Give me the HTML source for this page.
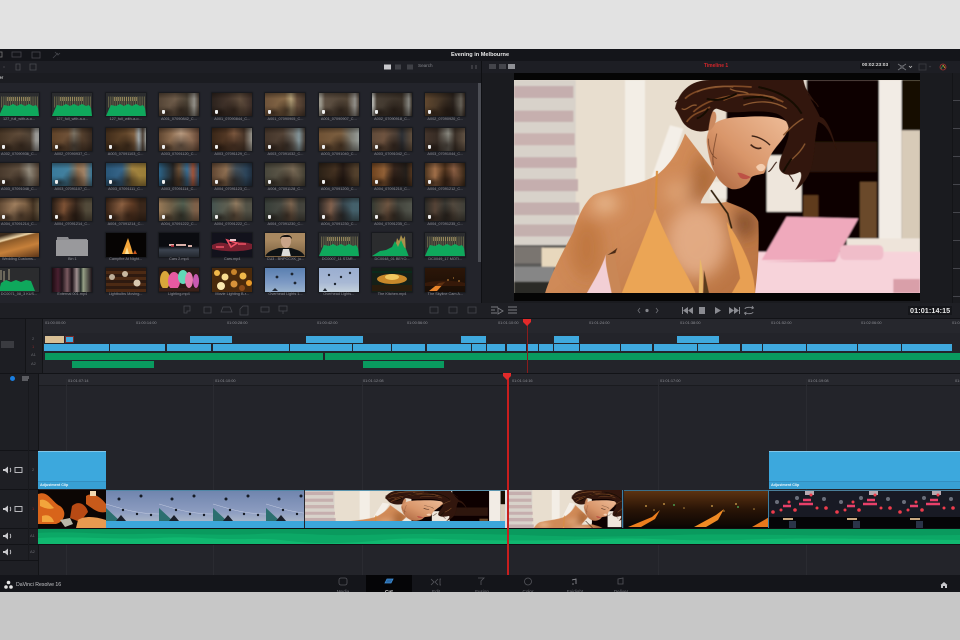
<!DOCTYPE html>
<html><head><meta charset="utf-8"><title>DaVinci Resolve 16</title>
<style>
*{box-sizing:border-box}
html,body{margin:0;padding:0;width:960px;height:640px;overflow:hidden}
body{background:linear-gradient(#e2e2e2 0,#e2e2e2 49px,#c7c7c7 592px);font-family:"Liberation Sans",sans-serif;position:relative}
.a{position:absolute}
#app{left:0;top:49px;width:960px;height:543px;background:#22232a;overflow:hidden;filter:blur(.3px)}
#g{left:-1px;top:44px;display:grid;grid-template-columns:repeat(9,40px);column-gap:13.3px;grid-auto-rows:35px}
.c{position:relative;height:35px}
.t{position:absolute;left:0;top:0;width:40px;height:23px;overflow:hidden;box-shadow:0 0 1px 1px #17181c}
.t svg{display:block;width:40px;height:23px}
.m:before{content:"";position:absolute;inset:0;background:radial-gradient(ellipse 12px 12px at 55% 75%,rgba(20,12,8,.55),transparent 100%),radial-gradient(ellipse 7px 5px at 20% 85%,rgba(20,12,8,.5),transparent 100%),linear-gradient(rgba(10,6,4,.45),rgba(10,6,4,.1) 25%,rgba(10,6,4,.1) 55%,rgba(10,6,4,.5))}
.m:after{content:"";position:absolute;left:3px;bottom:2px;width:3px;height:4px;background:#eee;border-radius:1px 1px 2px 2px}
.l{position:absolute;left:-6px;width:52px;top:24px;text-align:center;font-size:3.8px;line-height:5px;color:#92939a;white-space:nowrap;overflow:hidden}
.r{position:absolute;font-size:3.9px;color:#8d8e94;white-space:nowrap;line-height:5px}
.b{position:absolute;background:#3fa9de;height:7px;top:0}
.gr{position:absolute;background:#099a5f;height:7px}
.n{position:absolute;top:14px;width:46px;text-align:center;font-size:4.6px;line-height:5px;color:#75767c}
.tk{position:absolute;left:32px;font-size:4px;color:#6b6c72;line-height:5px}
</style></head><body>
<svg width="0" height="0" style="position:absolute"><defs>
<filter id="bl"><feGaussianBlur stdDeviation="2.2"/></filter>
<filter id="s1"><feGaussianBlur stdDeviation="1.1"/></filter>
<filter id="b6" x="-50%" y="-50%" width="200%" height="200%"><feGaussianBlur stdDeviation="24"/></filter>
<linearGradient id="sk" x1="0" y1="0" x2="1" y2="1"><stop offset="0" stop-color="#d98f5a"/><stop offset=".5" stop-color="#cf8a58"/><stop offset="1" stop-color="#b87240"/></linearGradient>
<linearGradient id="fc" x1="1" y1="0" x2="0" y2="1"><stop offset="0" stop-color="#eebc98"/><stop offset=".55" stop-color="#d9966a"/><stop offset="1" stop-color="#a8623c"/></linearGradient>
<symbol id="wv" viewBox="0 0 40 23" preserveAspectRatio="none"><rect width="40" height="23" fill="#2b2c2e"/><path d="M2 9H39" stroke="#97905f" stroke-width="11" stroke-dasharray="1 .8" opacity=".5"/><path d="M8 6H32" stroke="#c8b070" stroke-width="4" stroke-dasharray="1 1" opacity=".55"/><path d="M0 23l3-7 2-4 5 1 4-2 4 2 4-2 4 2 4-2 4 2 3-1 2 3 1 8z" fill="#0fa85c"/></symbol>
<symbol id="w" viewBox="12 14 1218 640" preserveAspectRatio="none">
<rect x="12" y="14" width="1218" height="640" fill="#e8decf"/>
<g filter="url(#bl)">
<rect x="12" y="14" width="185" height="510" fill="#d8d2ca"/>
<rect x="12" y="32" width="178" height="36" fill="#c5aeae"/><rect x="12" y="106" width="178" height="34" fill="#c6afae"/><rect x="12" y="174" width="182" height="36" fill="#c9b2b0"/><rect x="12" y="246" width="188" height="32" fill="#c6aeae"/><rect x="12" y="312" width="192" height="36" fill="#c5aeae"/><rect x="12" y="382" width="196" height="38" fill="#c4afae"/><rect x="12" y="448" width="200" height="36" fill="#c4b0ae"/>
<rect x="345" y="14" width="60" height="320" fill="#f3eee6"/>
<path d="M480 150l40 10-60 180-40-20z" fill="#f4efe8"/>
<rect x="12" y="510" width="230" height="150" fill="#5b5a58"/><rect x="12" y="620" width="180" height="40" fill="#2c2a28"/><rect x="12" y="515" width="90" height="50" fill="#7a7570"/><rect x="95" y="518" width="75" height="58" fill="#e8d8bd"/><rect x="12" y="575" width="120" height="45" fill="#868686"/>
<rect x="650" y="14" width="590" height="640" fill="#0b0504"/>
<rect x="890" y="200" width="210" height="90" fill="#2d140b"/><rect x="880" y="360" width="45" height="70" fill="#5f3a1f"/><rect x="1050" y="320" width="50" height="170" fill="#6a4a2c"/>
<rect x="770" y="240" width="105" height="170" fill="#eee6dc"/><rect x="850" y="14" width="40" height="70" fill="#e6ddd2"/><rect x="600" y="320" width="50" height="50" fill="#f1eadf"/>
<rect x="1107" y="14" width="68" height="500" fill="#f2ece5"/>
<rect x="1175" y="165" width="55" height="330" fill="#d8cbb8"/><rect x="1175" y="14" width="55" height="150" fill="#170a06"/>
<rect x="1010" y="490" width="220" height="45" fill="#eee4da"/>
<rect x="230" y="560" width="1000" height="100" fill="#f6d2d9"/>
<path d="M740 530h500v130H740z" fill="#f7d3da"/>
<path d="M755 555l75-130 215 5-70 125z" fill="#efa9bc"/><path d="M760 560l215-5 20-30-20 35z" fill="#e18ea8"/>
<rect x="990" y="510" width="130" height="45" rx="14" fill="#f0bdc9"/>
<rect x="1150" y="612" width="80" height="42" fill="#d99fa9"/>
</g>
<g filter="url(#s1)">
<clipPath id="bc"><path d="M105 655C125 590 165 520 190 470C205 420 225 380 250 360C290 340 380 335 440 300C480 270 510 220 525 175L620 300C600 340 575 365 572 385C600 385 630 385 650 380C690 395 735 410 745 440C748 500 745 580 735 655Z"/></clipPath>
<path d="M105 655C125 590 165 520 190 470C205 420 225 380 250 360C290 340 380 335 440 300C480 270 510 220 525 175L620 300C600 340 575 365 572 385C600 385 630 385 650 380C690 395 735 410 745 440C748 500 745 580 735 655Z" fill="url(#sk)"/>
<g clip-path="url(#bc)"><g filter="url(#b6)">
<ellipse cx="285" cy="385" rx="40" ry="25" fill="#f4d0ac" opacity=".75"/>
<path d="M570 220l50 80-40 90-45-15z" fill="#9a5828" opacity=".7"/>
<ellipse cx="500" cy="350" rx="40" ry="35" fill="#ecba92" opacity=".5"/>
<ellipse cx="560" cy="500" rx="90" ry="110" fill="#e8b490" opacity=".8"/>
<ellipse cx="705" cy="445" rx="35" ry="45" fill="#6e3f20" opacity=".75"/>
<ellipse cx="230" cy="520" rx="50" ry="90" fill="#b46a30" opacity=".55"/>
</g></g>
<path d="M230 655c20-35 45-75 58-118l18 118z" fill="#f2cfd5"/>
<path d="M305 655c-8-45-22-90-17-120l22-18 25 138z" fill="#c98756"/>
<path d="M292 540c12-8 22-14 30-22l-6 16z" fill="#4a2a18"/>
<path d="M435 402l-100 253h222c-16-40-45-85-65-125-22-48-42-85-57-128z" fill="#eba555"/>
<path d="M650 440c8 60 35 120 40 170l-25 45h70c0-70-40-150-85-215z" fill="#e8a052"/>
<path d="M436 402l5-115" stroke="#d98e3c" stroke-width="6" fill="none"/>
<path d="M603 345l50 70 12 45" stroke="#33200f" stroke-width="5" fill="none"/>
<path d="M566 655l4-105c10 30 10 80 8 105z" fill="#e8b868"/><path d="M580 655l2-70 15 70z" fill="#5a3a1e"/>
<path d="M590 200C590 150 620 125 700 125C770 120 830 125 838 150C830 190 790 215 775 255C770 270 768 285 762 295C745 300 725 300 722 310C715 330 690 345 665 342C630 330 600 290 590 200Z" fill="url(#fc)"/>
<path d="M585 130c-10 20 0 40 15 35 15-10 25-40 15-55-10-5-25 5-30 20z" fill="#cb8a60"/>
<path d="M725 182c20 2 42 14 55 28" stroke="#3a2114" stroke-width="4" fill="none"/><path d="M722 208c10 10 22 14 32 10" stroke="#3f2416" stroke-width="5" fill="none"/>
<path d="M682 293c14-2 26 8 40 12-10 10-25 8-32 2z" fill="#bd5145"/>
<path d="M738 275c10-12 22-12 28 0-2 15-20 20-28 0z" fill="#f4ceb0"/>
<path d="M495 100C505 50 540 14 600 14L880 14C890 60 920 100 930 125C950 125 970 180 980 225C965 190 955 150 925 140C915 170 915 230 905 270C900 300 880 330 855 345C870 320 880 300 870 290C840 305 815 300 808 280C805 250 825 225 835 185C840 160 835 130 800 115C750 100 690 115 650 110L620 100C605 100 600 130 595 165C570 175 530 165 515 135C505 115 500 105 495 100Z" fill="#33180d"/>
<g fill="none" stroke-width="5">
<path d="M525 70c40-40 140-40 200-35M550 110c40-40 130-60 200-50M640 75c50-25 120-25 180 5M530 140c20-30 50-30 70-45" stroke="#7f4a25"/>
<path d="M560 50c30-15 70-20 110-15M700 90c40-15 90-15 130 10M820 180c20-20 40-40 60-50M835 265c15-20 35-30 50-60M515 100c15 10 25-15 45-10M660 40c15 12 40 5 55 15M760 60c15 5 30 0 45 15" stroke="#8c5830" stroke-width="4"/>
<path d="M590 70c30 10 60 0 90-15M745 35c50 10 100 30 130 80M845 250c-15 20-20 30-25 40M700 70c30-5 60-10 90 5M560 130c15-5 25-15 35-30" stroke="#150a05" stroke-width="6"/>
<path d="M800 260c-10 10-15 25-25 30M830 285c5 15 15 20 20 35M895 60c10 15 25 20 30 35M520 60c-10 5-15 15-25 20M870 20c15 15 25 35 40 55" stroke="#33180d" stroke-width="3"/>
</g>
<path d="M620 175c-5 30-15 60-10 95M595 190c0 20 5 50 25 60" stroke="#6a3b22" stroke-width="2" fill="none"/>
</g>
</symbol>
</defs></svg>

<div id="app" class="a">
<!-- title bar -->
<div class="a" style="left:0;top:0;width:960px;height:12px;background:#14151a"></div>
<svg class="a" style="left:0;top:1px" width="70" height="10" fill="none" stroke="#45464c" stroke-width=".8"><rect x="-3" y="2" width="5" height="5" stroke="#777"/><rect x="12" y="2" width="9" height="5"/><rect x="32" y="2" width="8" height="6"/><path d="M53 8l5-5M55 2l3 3 2-2"/></svg>
<div class="a" style="left:380px;width:200px;top:3px;text-align:center;font-size:5.6px;font-weight:bold;line-height:7px;color:#e8e8e8">Evening in Melbourne</div>
<!-- toolbar left -->
<div class="a" style="left:0;top:12px;width:482px;height:12px;background:#1e1f25"></div>
<svg class="a" style="left:0;top:13px" width="40" height="10" fill="none" stroke="#4b4c52" stroke-width=".8"><path d="M3 5h2"/><path d="M16 2h4v6h-4zM30 2h6v6h-6z"/></svg>
<svg class="a" style="left:382px;top:13px" width="100" height="10" fill="none"><path d="M2 2.500h7v5H2z" fill="#c8c8cc"/><path d="M13 2.500h6v5h-6z" fill="#3f4046"/><path d="M25 2.500h6v5h-6z" fill="#3f4046"/><path d="M90 3v4M94 3v4" stroke="#55565b"/></svg>
<div class="a" style="left:418px;top:14px;font-size:4.6px;line-height:6px;color:#85868c">Search</div>
<!-- path -->
<div class="a" style="left:0;top:24px;width:482px;height:10px;background:#1b1c21"></div>
<div class="a" style="left:-11px;top:26px;font-size:4.4px;font-weight:bold;line-height:6px;color:#d8d8d8">Master</div>
<!-- bin -->
<div class="a" style="left:0;top:34px;width:482px;height:220px;background:#23242b"></div>
<div class="a" style="left:478px;top:34px;width:3px;height:179px;background:#4c4e55"></div>
<div id="g" class="a">
<div class="c"><div class="t"><svg><use href="#wv"/></svg></div><div class="l">127_full_with-a-o...</div></div>
<div class="c"><div class="t"><svg><use href="#wv"/></svg></div><div class="l">127_full_with-a-o...</div></div>
<div class="c"><div class="t"><svg><use href="#wv"/></svg></div><div class="l">127_full_with-a-o...</div></div>
<div class="c"><div class="t m" style="background:linear-gradient(90deg,#5d4c3c,#7a6652 40%,#544a3c 70%,#a09e96 88%,#4d4136)"></div><div class="l">A001_07090842_C...</div></div>
<div class="c"><div class="t m" style="background:linear-gradient(90deg,#2f2520,#4a3a30 40%,#6a5644 70%,#40302a)"></div><div class="l">A001_07090844_C...</div></div>
<div class="c"><div class="t m" style="background:linear-gradient(90deg,#7a5c40,#94744f 50%,#c9b487 65%,#6d5440 80%,#4a3a2e)"></div><div class="l">A001_07090905_C...</div></div>
<div class="c"><div class="t m" style="background:linear-gradient(90deg,#a8a498 5%,#67584a 15%,#5a4c3c 70%,#a09e98 90%,#554a40)"></div><div class="l">A001_07090907_C...</div></div>
<div class="c"><div class="t m" style="background:linear-gradient(90deg,#c0c0ba 3%,#4f453a 12%,#40362c 75%,#92928c 92%,#3f3830)"></div><div class="l">A002_07090918_C...</div></div>
<div class="c"><div class="t m" style="background:linear-gradient(90deg,#6a4f34,#4a3a2a 40%,#2e2620 70%,#6f6a60 90%,#3a2f26)"></div><div class="l">A002_07090920_C...</div></div>

<div class="c"><div class="t m" style="background:linear-gradient(90deg,#4c3a28,#6a5440 50%,#56483a 78%,#a8a8a4 92%)"></div><div class="l">A002_07090936_C...</div></div>
<div class="c"><div class="t m" style="background:linear-gradient(90deg,#6b4a2d,#7a5a3e 40%,#8b8272 55%,#5d4632 75%,#3c2d22)"></div><div class="l">A002_07090937_C...</div></div>
<div class="c"><div class="t m" style="background:linear-gradient(90deg,#46301c,#6e4f30 50%,#8d6a48 70%,#aeb8bc 82%,#584a3e 92%,#a6aaa8)"></div><div class="l">A003_07091103_C...</div></div>
<div class="c"><div class="t m" style="background:linear-gradient(90deg,#6a4e36,#9a7758 30%,#cfae90 55%,#aa8568 75%,#6a4a38)"></div><div class="l">A003_07091120_C...</div></div>
<div class="c"><div class="t m" style="background:linear-gradient(90deg,#3f2a1a,#5a3d28 35%,#8a6246 55%,#4e3a2c 80%,#a7a59c)"></div><div class="l">A003_07091129_C...</div></div>
<div class="c"><div class="t m" style="background:linear-gradient(90deg,#4a3a2e,#5c4a3c 45%,#7c7a74 70%,#8fa4aa 85%,#4a4038)"></div><div class="l">A003_07091032_C...</div></div>
<div class="c"><div class="t m" style="background:linear-gradient(90deg,#7a5a3a,#8a6a48 55%,#8a8a80 80%,#a5aca8)"></div><div class="l">A003_07091040_C...</div></div>
<div class="c"><div class="t m" style="background:linear-gradient(90deg,#6a5240,#7a5c46 30%,#54463c 60%,#30343a 75%,#6a5642)"></div><div class="l">A003_07091042_C...</div></div>
<div class="c"><div class="t m" style="background:linear-gradient(90deg,#4a3a30,#3c3028 30%,#9a9a90 58%,#40352c 75%,#6a5a4a)"></div><div class="l">A003_07091044_C...</div></div>

<div class="c"><div class="t m" style="background:linear-gradient(90deg,#4e3e30,#6a5846 50%,#a29a8a 75%,#5e4c3c)"></div><div class="l">A003_07091048_C...</div></div>
<div class="c"><div class="t m" style="background:linear-gradient(90deg,#3f87ad,#4a8fb0 40%,#a8835f 65%,#b08f70 80%,#3a7fa4)"></div><div class="l">A003_07091107_C...</div></div>
<div class="c"><div class="t m" style="background:linear-gradient(90deg,#2c5f85,#3c7098 40%,#b49248 65%,#a98a3c)"></div><div class="l">A003_07091111_C...</div></div>
<div class="c"><div class="t m" style="background:linear-gradient(90deg,#2f6d96,#2a2a2a 35%,#7a5a3c 50%,#3c7aa6 70%,#b05a3c 85%,#24557a)"></div><div class="l">A003_07091114_C...</div></div>
<div class="c"><div class="t m" style="background:linear-gradient(90deg,#6a4e38,#9c7a5a 35%,#4a5a66 60%,#2f4a62 85%,#223346)"></div><div class="l">A004_07091123_C...</div></div>
<div class="c"><div class="t m" style="background:linear-gradient(90deg,#4f4e42,#645e4e 40%,#84745e 70%,#4a4638)"></div><div class="l">A004_07091128_C...</div></div>
<div class="c"><div class="t m" style="background:linear-gradient(90deg,#2e2318,#4a3624 40%,#2a1e18 60%,#5a4630 90%)"></div><div class="l">A004_07091200_C...</div></div>
<div class="c"><div class="t m" style="background:linear-gradient(90deg,#7a4a22,#a06a3c 30%,#3c2a20 55%,#25201c 85%,#5a3a20)"></div><div class="l">A004_07091210_C...</div></div>
<div class="c"><div class="t m" style="background:linear-gradient(90deg,#543a22,#b07a50 25%,#54361e 50%,#98684a 72%,#3c2a18)"></div><div class="l">A004_07091212_C...</div></div>

<div class="c"><div class="t m" style="background:linear-gradient(90deg,#6a5038,#b08c68 40%,#907050 65%,#4a3826 85%,#6a5a42)"></div><div class="l">A004_07091214_C...</div></div>
<div class="c"><div class="t m" style="background:linear-gradient(90deg,#2c2018,#8a5a3a 30%,#3e2c20 60%,#5a5240 85%)"></div><div class="l">A004_07091214_C...</div></div>
<div class="c"><div class="t m" style="background:linear-gradient(90deg,#3c2618,#9a6a48 40%,#6a4228 65%,#3e2a1c 85%)"></div><div class="l">A004_07091214_C...</div></div>
<div class="c"><div class="t m" style="background:linear-gradient(90deg,#a88660,#7a6a50 30%,#5a6a5a 60%,#8a6a50 90%)"></div><div class="l">A004_07091222_C...</div></div>
<div class="c"><div class="t m" style="background:linear-gradient(90deg,#4c5c58,#6a6a5a 40%,#a38a6c 60%,#5a5a4e 85%)"></div><div class="l">A004_07091222_C...</div></div>
<div class="c"><div class="t m" style="background:linear-gradient(90deg,#3c443e,#50524a 40%,#8a7058 65%,#4a4a42 85%)"></div><div class="l">A004_07091230_C...</div></div>
<div class="c"><div class="t m" style="background:linear-gradient(90deg,#2e2a28,#8e6a54 30%,#3c4c54 60%,#4a6a76 85%)"></div><div class="l">A004_07091230_C...</div></div>
<div class="c"><div class="t m" style="background:linear-gradient(90deg,#3a4038,#7a5e48 40%,#4a4c44 65%,#5a5e54)"></div><div class="l">A004_07091235_C...</div></div>
<div class="c"><div class="t m" style="background:linear-gradient(90deg,#2e2e2a,#5e4a3c 25%,#3e3e38 50%,#5a5044 70%,#46463e)"></div><div class="l">A004_07091235_C...</div></div>

<div class="c"><div class="t" style="height:24px;background:linear-gradient(165deg,#3a2a1a 10%,#efd6a8 25%,#8c5a28 30%,#c6803a 60%,#5a3418)"></div><div class="l">Wedding Customs...</div></div>
<div class="c"><div class="t" style="height:24px;background:#23242b;box-shadow:none"><svg><path d="M5 4h11l1 2h18l1 17H4z" fill="#8b8b8f"/><path d="M4 7h32v16H4z" fill="#99999c"/></svg></div><div class="l">Bin 1</div></div>
<div class="c"><div class="t" style="height:24px;background:#060403"><svg><path d="M16 21l3-8 3-8 3 9 2 7z" fill="#f3a63a"/><path d="M19 21l2-7 2 7z" fill="#fbe39a"/><path d="M27 21l2-4 2 4z" fill="#c9561e"/></svg></div><div class="l">Campfire At Night...</div></div>
<div class="c"><div class="t" style="height:24px;background:linear-gradient(#0b0c10 55%,#3c4450 70%,#23272e)"><svg><path d="M10 12h5M17 12h10M29 13h4" stroke="#d9b0a8" stroke-width="2"/><path d="M12 13h3" stroke="#c92a3a" stroke-width="1.500"/></svg></div><div class="l">Cars 2.mp4</div></div>
<div class="c"><div class="t" style="height:24px;background:#12121c"><svg><path d="M0 12c6-3 10-3 16-1 6-3 14-3 24 0v5c-10 3-28 3-40 0z" fill="#7a2030"/><path d="M15 7l10 3-6 4zM4 14h8M26 11h8" stroke="#ee5266" stroke-width="1.600" fill="none"/><path d="M18 6h6v2h-6z" fill="#e8c8cc"/></svg></div><div class="l">Cars.mp4</div></div>
<div class="c"><div class="t" style="height:24px;background:linear-gradient(#a88860 30%,#7a6040)"><svg><path d="M0 24c2-6 8-7 14-9l12 0c6 2 12 3 14 9z" fill="#0e1214"/><ellipse cx="21" cy="8" rx="5" ry="7" fill="#c9a488"/><path d="M15 6c0-5 12-6 12 0l-2-2h-8z" fill="#15110e"/><path d="M18 16h6l2 8h-10z" fill="#dcdcd8"/></svg></div><div class="l">CU3 - BNPCCXK_ju...</div></div>
<div class="c"><div class="t" style="height:24px"><svg><use href="#wv"/></svg></div><div class="l">DC0007_11 STAR...</div></div>
<div class="c"><div class="t" style="height:24px;background:#2b2c2e"><svg><path d="M22 20V11l2-1 1-5 2 3 2-6 2 4 2-3 1 18z" fill="#a9914c"/><path d="M0 23l8-5 6-1 6-3 3-6 3 6 3-7 3 7 2 2 3 8z" fill="#0fa85c"/></svg></div><div class="l">DC0048_01 BEYO...</div></div>
<div class="c"><div class="t" style="height:24px"><svg><use href="#wv"/></svg></div><div class="l">DC0049_17 MOTI...</div></div>

<div class="c"><div class="t" style="height:24px;background:#2b2c2e"><svg><path d="M2 12V2M5 14V3M10 12V1" stroke="#a8a086"/><path d="M0 23l2-8 5-3 5 2 5-2 5 2 5-2 5 1 4 10z" fill="#0fa85c"/></svg></div><div class="l">DC0071_08_3 KUS...</div></div>
<div class="c"><div class="t" style="height:24px;background:linear-gradient(90deg,#1c0c12,#4a2030 15%,#20141a 25%,#7a5a60 38%,#1a1016 50%,#a09090 62%,#26302a 72%,#96a086 78%,#1c1218)"></div><div class="l">External 001.mp4</div></div>
<div class="c"><div class="t" style="height:24px;background:repeating-linear-gradient(#2e1a10 0 3px,#4c2a14 3px 6px)"><svg><circle cx="6" cy="9" r="3" fill="#bfb09a"/><circle cx="19" cy="6" r="3" fill="#c9b8a0"/><circle cx="31" cy="15" r="3.500" fill="#d8c8b0"/></svg></div><div class="l">Lightbulbs Moving...</div></div>
<div class="c"><div class="t" style="height:24px;background:#2a1a14"><svg><ellipse cx="6" cy="12" rx="5" ry="9" fill="#d9a63a"/><ellipse cx="15" cy="13" rx="6" ry="9" fill="#e85aa0"/><ellipse cx="24" cy="9" rx="5" ry="7" fill="#62d8b8"/><ellipse cx="30" cy="12" rx="4" ry="8" fill="#e87ab0"/><ellipse cx="37" cy="13" rx="3" ry="7" fill="#c85ab0"/><path d="M0 20h40v4H0z" fill="#3a2018"/></svg></div><div class="l">Lighting.mp4</div></div>
<div class="c"><div class="t" style="height:24px;background:#4a2a0c"><svg fill="#f0b84a"><circle cx="5" cy="5" r="3"/><circle cx="13" cy="9" r="3.500" fill="#f8dc90"/><circle cx="22" cy="4" r="3" fill="#c8842a"/><circle cx="31" cy="8" r="3.500"/><circle cx="37" cy="15" r="3" fill="#e89a2a"/><circle cx="9" cy="18" r="4" fill="#fae8b0"/><circle cx="22" cy="16" r="3.500" fill="#d8923a"/><circle cx="30" cy="20" r="3" fill="#8a4a1a"/></svg></div><div class="l">Movie Lighting B-r...</div></div>
<div class="c"><div class="t" style="height:24px;background:linear-gradient(#5a7fb0,#7d9ac4 60%,#9ab2cc)"><svg fill="#1d2530"><circle cx="12" cy="9" r="1.400"/><circle cx="27" cy="6" r="1.400"/><circle cx="30" cy="15" r="1.400"/><path d="M6 24l4-4 4 4z"/></svg></div><div class="l">Overhead Lights 1...</div></div>
<div class="c"><div class="t" style="height:24px;background:linear-gradient(#9aaed0,#a8b8d4 60%,#c4d2dc)"><svg fill="#1d2530"><circle cx="10" cy="7" r="1.200"/><circle cx="22" cy="9" r="1.200"/><circle cx="31" cy="5" r="1.200"/><circle cx="16" cy="16" r="1.200"/><path d="M3 24l3-4 3 4z"/></svg></div><div class="l">Overhead Lights...</div></div>
<div class="c"><div class="t" style="height:24px;background:#152018"><svg><ellipse cx="20" cy="11" rx="15" ry="5" fill="#c8882a"/><ellipse cx="20" cy="9" rx="7" ry="3" fill="#f0c860"/><path d="M0 17h40v7H0z" fill="#2a1c0c"/><path d="M0 3h40v2H0z" fill="#0a2a1c"/></svg></div><div class="l">The Kitchen.mp4</div></div>
<div class="c"><div class="t" style="height:24px;background:linear-gradient(#2c1608,#1a0e06)"><svg><path d="M4 23l10-8 6-1-8 9z" fill="#e8842a"/><path d="M0 15c10-3 30-3 40 0v3H0z" fill="#3c1c0a" opacity=".8"/><path d="M22 12h2M28 10h1M33 13h2" stroke="#c8883a"/></svg></div><div class="l">The Skyline Cam A...</div></div>
</div>

<!-- edit tool row -->
<div class="a" style="left:0;top:254px;width:482px;height:15px;background:#1e1f24"></div>
<svg class="a" style="left:180px;top:255px" width="300" height="13" fill="none" stroke="#47484e" stroke-width=".8"><path d="M4 2h6v5H7v2H4zM24 3h7v6h-7zM41 8l2-5h7l2 5zM63 2h5v9h-8V5zM81 3h8v5h-8zM99 2h8v5h-8zM103 7v3M250 3h8v6h-8zM269 3h8v6h-8zM288 3h8v6h-8z"/></svg>
<!-- viewer -->
<div class="a" style="left:482px;top:12px;width:478px;height:12px;background:#1d1e24"></div>
<div class="a" style="left:482px;top:24px;width:478px;height:230px;background:#1a1b1f"></div>
<div class="a" style="left:481px;top:12px;width:1px;height:242px;background:#0f1013"></div>
<svg class="a" style="left:486px;top:14px" width="30" height="8"><rect x="3" y="1" width="7" height="5" fill="#44454b"/><rect x="13" y="1" width="7" height="5" fill="#44454b"/><rect x="22" y="1" width="7" height="5" fill="#8f9095"/></svg>
<div class="a" style="left:660px;width:112px;top:14px;text-align:center;font-size:5px;font-weight:bold;line-height:6px;color:#d2262a">Timeline 1</div>
<div class="a" style="left:860px;top:14px;font-size:4.8px;font-weight:bold;line-height:6px;color:#dcdcdc;background:#121317;padding:0 2px;border-radius:1px">00:02:23:03</div>
<svg class="a" style="left:895px;top:13px" width="60" height="10" fill="none" stroke="#7a7b80" stroke-width=".8"><path d="M3 2l3 2M11 2l-3 2M3 8l3-2M11 8l-3-2M6 4h2v2H6z"/><path d="M14 4l1.500 1.500L17 4" stroke="#bbb"/><rect x="24" y="2" width="7" height="6" stroke="#3c3d42"/><path d="M34 4l1 1 1-1" stroke="#3c3d42"/><circle cx="48" cy="5" r="3" stroke="#a33"/><path d="M46 7l2-4" stroke="#3a9a50"/><path d="M48 3l2 3" stroke="#c9a82a"/></svg>
<div class="a" style="left:514px;top:24px;width:406px;height:228px;background:#050505"></div>
<svg class="a" style="left:514px;top:31px" width="406" height="213"><use href="#w" width="406" height="213"/></svg>
<div class="a" style="left:952px;top:24px;width:8px;height:230px;border-left:1px solid #131417;background:repeating-linear-gradient(transparent 0 27px,#45464c 27px 28px)"></div>
<!-- controls -->
<div class="a" style="left:482px;top:254px;width:478px;height:15px;background:#1e1f24"></div>
<svg class="a" style="left:488px;top:255px" width="30" height="13" fill="none" stroke="#7a7b80" stroke-width=".9"><path d="M3 3h7M3 6h4M3 9h6M10 4l5 3-5 3z"/><path d="M20 3h9M20 6h9M20 9h9"/></svg>
<svg class="a" style="left:634px;top:255px" width="125" height="13"><g fill="none" stroke="#6f7076" stroke-width=".8"><path d="M6 4L4 6.500l2 2.500M22 4l2 2.500-2 2.500"/></g><circle cx="13" cy="6.500" r="1.600" fill="#85868c"/><g fill="#8a8b91"><path d="M48 3h1v7h-1zM54 3v7l-5-3.500zM59 3v7l-5-3.500zM65 3h6v7h-6zM81 3l6 3.500-6 3.500zM95 3v7l5-3.500zM100 3v7l5-3.500zM105 3h1v7h-1z"/></g><path d="M111 5c0-2 6-2 8-1M119 8c0 2-6 2-8 1M118 2l1.500 2-2 1M112 11l-1.500-2 2-1" fill="none" stroke="#8a8b91" stroke-width=".9"/></svg>
<div class="a" style="left:908px;top:257px;font-size:7.2px;font-weight:bold;line-height:9px;color:#e9e9e9;background:#15161a;padding:0 2px;letter-spacing:.1px">01:01:14:15</div>

<!-- upper timeline -->
<div class="a" style="left:0;top:269px;width:960px;height:55px;background:#23242a"></div>
<div class="a" style="left:0;top:269px;width:960px;height:1px;background:#121317"></div>
<div class="a" style="left:0;top:270px;width:26px;height:54px;background:#1d1e23;border-right:1px solid #131417"></div>
<div class="a" style="left:26px;top:270px;width:17px;height:54px;background:#1f2025;border-right:1px solid #131417"></div>
<div class="a" style="left:43px;top:270px;width:917px;height:14px;background:#26272d"></div>
<div class="a" style="left:1px;top:292px;width:13px;height:7px;background:#3a3b40"></div>
<div class="tk" style="top:287px">2</div><div class="tk" style="top:295px;color:#8a2a2a">1</div><div class="tk" style="top:303px;left:31px">A1</div><div class="tk" style="top:312px;left:31px">A2</div>
<div class="r" style="left:45px;top:271px">01:00:00:00</div><div class="r" style="left:136px;top:271px">01:00:14:00</div><div class="r" style="left:227px;top:271px">01:00:28:00</div><div class="r" style="left:317px;top:271px">01:00:42:00</div><div class="r" style="left:407px;top:271px">01:00:56:00</div><div class="r" style="left:498px;top:271px">01:01:10:00</div><div class="r" style="left:589px;top:271px">01:01:24:00</div><div class="r" style="left:680px;top:271px">01:01:38:00</div><div class="r" style="left:771px;top:271px">01:01:52:00</div><div class="r" style="left:861px;top:271px">01:02:06:00</div><div class="r" style="left:952px;top:271px">01:02:20:00</div>
<div class="a" id="v2" style="left:0;top:287px;width:960px;height:7px">
<div class="b" style="left:45px;width:19px;background:#d8bf95"></div><div class="b" style="left:65px;width:9px;outline:1px solid #7a2a2a;outline-offset:-1px"></div>
<div class="b" style="left:190px;width:42px"></div><div class="b" style="left:306px;width:57px"></div><div class="b" style="left:461px;width:25px"></div><div class="b" style="left:554px;width:25px"></div><div class="b" style="left:677px;width:42px"></div>
</div>
<div class="a" style="left:0;top:295px;width:960px;height:7px">
<div class="b" style="left:44px;width:65px"></div><div class="b" style="left:110px;width:55px"></div><div class="b" style="left:167px;width:44px"></div><div class="b" style="left:213px;width:76px"></div><div class="b" style="left:290px;width:62px"></div><div class="b" style="left:353px;width:38px"></div><div class="b" style="left:392px;width:33px"></div><div class="b" style="left:427px;width:44px"></div><div class="b" style="left:472px;width:14px"></div><div class="b" style="left:487px;width:18px"></div><div class="b" style="left:507px;width:19px"></div><div class="b" style="left:527px;width:11px"></div><div class="b" style="left:539px;width:14px"></div><div class="b" style="left:554px;width:25px"></div><div class="b" style="left:580px;width:40px"></div><div class="b" style="left:621px;width:31px"></div><div class="b" style="left:654px;width:43px"></div><div class="b" style="left:698px;width:42px"></div><div class="b" style="left:742px;width:20px"></div><div class="b" style="left:763px;width:43px"></div><div class="b" style="left:807px;width:50px"></div><div class="b" style="left:858px;width:43px"></div><div class="b" style="left:902px;width:50px"></div>
</div>
<div class="gr" style="left:45px;top:304px;width:278px"></div><div class="gr" style="left:325px;top:304px;width:635px"></div>
<div class="gr" style="left:72px;top:312px;width:82px"></div><div class="gr" style="left:363px;top:312px;width:81px"></div>
<div class="a" style="left:527px;top:272px;width:1px;height:52px;background:#8a1c1c"></div>
<svg class="a" style="left:523px;top:270px" width="9" height="7"><path d="M0 0h8v3L4 7 0 3z" fill="#e22a2a"/></svg>

<!-- lower timeline -->
<div class="a" style="left:0;top:324px;width:960px;height:203px;background:#23242a"></div>
<div class="a" style="left:0;top:324px;width:960px;height:1px;background:#121317"></div>
<div class="a" style="left:38px;top:325px;width:922px;height:12px;background:#26272d;border-bottom:1px solid #1a1b1f"></div>
<div class="a" style="left:0;top:325px;width:39px;height:202px;background:#1e1f24;border-right:1px solid #131417"></div>
<div class="a" style="left:10px;top:327px;width:5px;height:5px;border-radius:50%;background:#1a7ee0"></div><div class="a" style="left:22px;top:327px;width:7px;height:5px;background:#5a5b60"></div>
<div class="r" style="left:68px;top:329px">01:01:07:14</div><div class="r" style="left:215px;top:329px">01:01:10:00</div><div class="r" style="left:363px;top:329px">01:01:12:08</div><div class="r" style="left:512px;top:329px">01:01:14:16</div><div class="r" style="left:660px;top:329px">01:01:17:00</div><div class="r" style="left:808px;top:329px">01:01:19:08</div><div class="r" style="left:955px;top:329px">01:01:21:16</div>
<div class="a" style="left:66px;top:330px;width:1px;height:197px;background:#2a2b31"></div><div class="a" style="left:213px;top:330px;width:1px;height:197px;background:#2a2b31"></div><div class="a" style="left:362px;top:330px;width:1px;height:197px;background:#2a2b31"></div><div class="a" style="left:658px;top:330px;width:1px;height:197px;background:#2a2b31"></div><div class="a" style="left:806px;top:330px;width:1px;height:197px;background:#2a2b31"></div>

<div class="a" style="left:0;top:401px;width:39px;height:1px;background:#121317"></div>
<div class="a" style="left:0;top:440px;width:39px;height:1px;background:#121317"></div>
<div class="a" style="left:0;top:479px;width:39px;height:1px;background:#121317"></div>
<div class="a" style="left:0;top:495px;width:39px;height:1px;background:#121317"></div>
<div class="a" style="left:0;top:511px;width:39px;height:1px;background:#121317"></div>
<div class="a" style="left:28px;top:330px;width:1px;height:181px;background:#18191d"></div>
<svg class="a" style="left:2px;top:410px" width="24" height="100"><g fill="#c8c8cc"><path d="M1 10h2l3-2.500v7L3 12H1zM1 49h2l3-2.500v7L3 51H1zM1 76h2l3-2.500v7L3 78H1zM1 92h2l3-2.500v7L3 94H1z"/></g><g fill="none" stroke="#c8c8cc" stroke-width=".9"><path d="M8 9c1 1 1 3 0 4M8 48c1 1 1 3 0 4M8 75c1 1 1 3 0 4M8 91c1 1 1 3 0 4"/><rect x="13" y="8.500" width="7" height="5"/><rect x="13" y="47.500" width="7" height="5"/></g></svg>
<div class="tk" style="top:418px">2</div><div class="tk" style="top:457px;color:#8a2a2a">1</div><div class="tk" style="top:484px;left:30px">A1</div><div class="tk" style="top:500px;left:30px">A2</div>

<!-- V2 clips -->
<div class="a" style="left:38px;top:402px;width:68px;height:38px;background:#3ca8dd;border-top:1px solid #7fc6ea"><div class="a" style="left:0;top:29px;width:68px;height:8px;background:#38a0d4;border-top:1px solid #3390c2;font-size:3.700px;font-weight:bold;line-height:7px;color:#e8f4fa;padding-left:2px">Adjustment Clip</div></div>
<div class="a" style="left:769px;top:402px;width:191px;height:38px;background:#3ca8dd;border-top:1px solid #7fc6ea"><div class="a" style="left:0;top:29px;width:191px;height:8px;background:#38a0d4;border-top:1px solid #3390c2;font-size:3.700px;font-weight:bold;line-height:7px;color:#e8f4fa;padding-left:2px">Adjustment Clip</div></div>

<!-- V1 clips -->
<svg class="a" style="left:38px;top:441px" width="68" height="38"><rect width="68" height="38" fill="#0c0604"/><path d="M0 4c10-4 14 8 22 12 8 6 4 16-4 18H0z" fill="#d8641a"/><path d="M2 10c6-2 10 4 14 8-4 2-10 0-14-2zM4 26c6-2 10 0 12 6H4z" fill="#f2a53c"/><path d="M34 16c6-6 14-2 16 6l-8 10-10-4z" fill="#b84a14"/><path d="M48 6c6-4 14 0 20 8v8c-8 2-14-4-20-8z" fill="#c85a1a"/><path d="M40 30c6-4 16-4 28 0v8H38z" fill="#e89a50"/><path d="M22 30l10-2 3 6-8 3z" fill="#b8b8a8"/><path d="M52 1h6v5h-6z" fill="#f0d8b0"/></svg>
<svg class="a" style="left:106px;top:441px" width="198" height="38"><defs><linearGradient id="sy" x1="0" y1="0" x2="0" y2="1"><stop offset="0" stop-color="#6f84ad"/><stop offset=".7" stop-color="#8c9cc0"/><stop offset="1" stop-color="#a8b4c8"/></linearGradient><g id="ss"><rect width="54" height="31" fill="url(#sy)"/><path d="M0 18l14 13H0z" fill="#2b6f6f"/><path d="M10 31l5-6 5 6z" fill="#1a1f2a"/><path d="M0 14c14 4 30 10 54 10" stroke="#c4cce2" stroke-width=".5" fill="none"/><g fill="#141a24"><circle cx="13" cy="9" r="1.500"/><circle cx="35" cy="6" r="1.500"/><circle cx="17" cy="20" r="1.200"/><circle cx="31" cy="24" r="1.200"/><circle cx="45" cy="25" r="1.200"/></g></g></defs><use href="#ss"/><use href="#ss" x="53"/><use href="#ss" x="107"/><use href="#ss" x="160"/><rect y="31" width="198" height="7" fill="#3ca6da"/><rect x="0" y="0" width="198" height="1" fill="#4e87a6"/></svg>
<div class="a" style="left:305px;top:441px;width:200px;height:38px;overflow:hidden;background:#3ca6da"><svg class="a" style="left:-2px;top:0" width="207" height="60"><use href="#w" width="207" height="60"/></svg><div class="a" style="left:0;top:31px;width:200px;height:7px;background:#3ca6da"></div><div class="a" style="left:0;top:0;width:200px;height:1px;background:#5a94ae"></div></div>
<div class="a" style="left:505px;top:441px;width:118px;height:38px;overflow:hidden;background:#ddd;border-right:1px solid #3b7fa3"><svg class="a" style="left:3px;top:0" width="160" height="60"><use href="#w" width="160" height="60"/></svg></div>
<svg class="a" style="left:624px;top:441px" width="145" height="38"><defs><linearGradient id="cy" x1="0" y1="0" x2="0" y2="1"><stop offset="0" stop-color="#5f3412"/><stop offset=".5" stop-color="#2a1507"/><stop offset="1" stop-color="#0a0503"/></linearGradient></defs><rect width="145" height="38" fill="url(#cy)"/><path d="M4 37l24-10 8-7-5 9-14 8z" fill="#ec7e1e"/><path d="M70 37l22-12 8-6-6 11-12 7z" fill="#ef8a24"/><path d="M128 37l14-8 3-2v10z" fill="#e8781c"/><g fill="#b88a40"><circle cx="22" cy="16" r="1"/><circle cx="40" cy="14" r="1"/><circle cx="88" cy="16" r="1"/><circle cx="112" cy="14" r="1"/><circle cx="30" cy="20" r=".8"/><circle cx="60" cy="18" r=".8"/><circle cx="100" cy="21" r=".8"/><circle cx="130" cy="19" r=".8"/></g><g fill="#4a9a50"><circle cx="50" cy="15" r="1"/><circle cx="114" cy="17" r="1"/></g><rect width="145" height="1" fill="#3b6f8a"/><rect x="144" width="1" height="38" fill="#3b7fa3"/></svg>
<svg class="a" style="left:769px;top:441px" width="191" height="38"><defs><g id="rd"><rect width="64" height="38" fill="#181a24"/><rect y="27" width="64" height="11" fill="#050507"/><rect x="36" width="9" height="5" fill="#b8a8b0"/><path d="M14 16h8M30 14h14M34 10h8" stroke="#e8406a" stroke-width="2.500" fill="none"/><g fill="#ef3c4c"><circle cx="4" cy="22" r="1.800"/><circle cx="12" cy="20" r="1.500"/><circle cx="20" cy="12" r="1.500"/><circle cx="26" cy="20" r="1.800"/><circle cx="42" cy="5" r="1.500"/><circle cx="48" cy="18" r="1.500"/><circle cx="57" cy="18" r="1.800"/></g><g fill="#6a6e7a"><circle cx="8" cy="12" r="2"/><circle cx="28" cy="8" r="2"/><circle cx="55" cy="9" r="2"/></g><path d="M14 29h10" stroke="#c8a880" stroke-width="2"/><rect x="20" y="31" width="7" height="7" fill="#2a3448"/></g></defs><use href="#rd"/><use href="#rd" x="64"/><use href="#rd" x="127"/><rect width="191" height="1" fill="#4a7f9a"/></svg>
<div class="a" style="left:38px;top:479px;width:922px;height:1px;background:#0d1011"></div>
<!-- A1 -->
<svg class="a" style="left:38px;top:480px" width="922" height="16"><rect width="922" height="16" fill="#0a9a5e"/><path d="M0 4c40-2 60 2 100 1s80 2 120 0 60 2 100 1 100-2 160 0 100 2 160 0 120 2 282 0v11H0z" fill="#0ca866"/><path d="M0 9c40-2 80 2 120 0s50 2 90 1 40 5 90 4 40-6 100-4 100 2 160 0 80 3 140 1 60-2 222 0v5H0z" fill="#10b870"/><rect y="15" width="922" height="1" fill="#077347"/></svg>
<div class="a" style="left:38px;top:495px;width:922px;height:1px;background:#121317"></div>
<!-- playhead -->
<div class="a" style="left:506.500px;top:328px;width:2px;height:199px;background:#c81e1e"></div>
<svg class="a" style="left:503px;top:324px" width="9" height="7"><path d="M0 0h8v3L4 7 0 3z" fill="#e22a2a"/></svg>

<!-- footer -->
<div class="a" style="left:0;top:526px;width:960px;height:17px;background:#14151a"></div>
<div class="a" style="left:366px;top:526px;width:46px;height:17px;background:#050507"></div>
<svg class="a" style="left:4px;top:531px" width="10" height="10" fill="#e4e4e4"><circle cx="4.500" cy="2.500" r="1.800"/><circle cx="2" cy="7" r="1.800"/><circle cx="7" cy="7" r="1.800"/></svg>
<div class="a" style="left:16px;top:533px;font-size:5.200px;line-height:7px;color:#c4c5c8">DaVinci Resolve 16</div>
<svg class="a" style="left:336px;top:527px" width="300" height="12" fill="none" stroke="#55565c" stroke-width=".8"><rect x="3" y="2" width="8" height="7" rx="2"/><path d="M49 7l2-4h6l-2 4z" stroke="#3f8fd8" fill="#2a6aa8"/><path d="M95 3l3 3-3 3M102 3l-3 3 3 3M105 3h-1v6h1"/><path d="M142 2h6l-3 3v4"/><circle cx="192" cy="5.500" r="3.500"/><path d="M236 4l4-1v5M238 8h-2" stroke="#9a9ba0"/><path d="M282 3l5-1v6h-5z"/></svg>
<div class="a" style="left:0;top:526px;width:960px;height:17px;overflow:hidden">
<div class="n" style="left:320px">Media</div><div class="n" style="left:366px;color:#e8e8e8;font-weight:bold">Cut</div><div class="n" style="left:413px">Edit</div><div class="n" style="left:459px">Fusion</div><div class="n" style="left:505px">Color</div><div class="n" style="left:552px">Fairlight</div><div class="n" style="left:598px">Deliver</div>
</div>
<svg class="a" style="left:940px;top:532px" width="8" height="8" fill="#c8c8cc"><path d="M4 1l3.500 3H7v3H5V5H3v2H1V4H.5z"/></svg>
</div>
</body></html>
